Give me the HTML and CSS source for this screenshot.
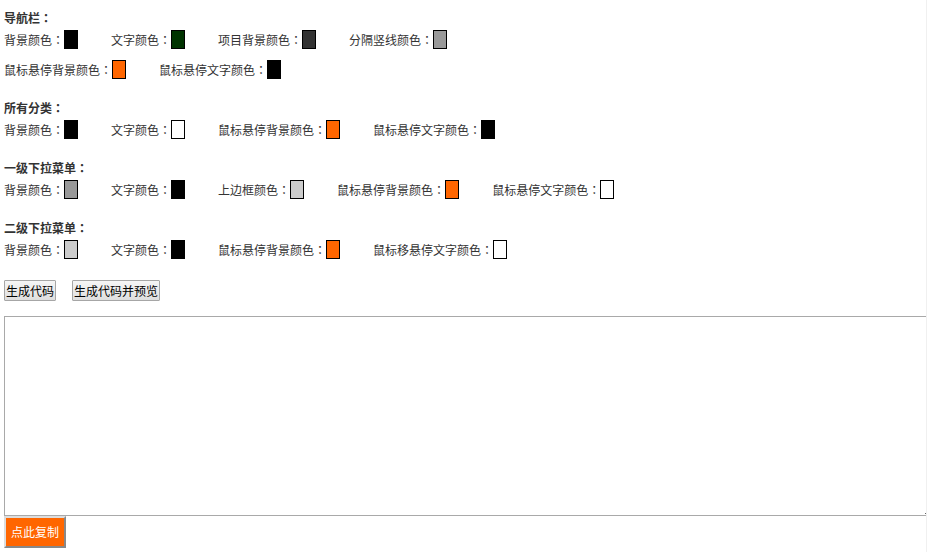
FILE: index.html
```html
<!DOCTYPE html>
<html lang="zh-CN">
<head>
<meta charset="utf-8">
<title>导航颜色设置</title>
<link rel="stylesheet" href="styles.css">
</head>
<body>
<main class="page">
  <section class="group">
    <h2 class="title">导航栏<span class="colon" lang="zh-TW">：</span></h2>
    <div class="row">
      <label class="field">背景颜色<span class="colon">：</span><input class="swatch" type="color" value="#000000"></label>
      <label class="field">文字颜色<span class="colon">：</span><input class="swatch" type="color" value="#003300"></label>
      <label class="field">项目背景颜色<span class="colon">：</span><input class="swatch" type="color" value="#333333"></label>
      <label class="field">分隔竖线颜色<span class="colon">：</span><input class="swatch" type="color" value="#999999"></label>
    </div>
    <div class="row">
      <label class="field">鼠标悬停背景颜色<span class="colon">：</span><input class="swatch" type="color" value="#ff6600"></label>
      <label class="field">鼠标悬停文字颜色<span class="colon">：</span><input class="swatch" type="color" value="#000000"></label>
    </div>
  </section>

  <section class="group">
    <h2 class="title">所有分类<span class="colon" lang="zh-TW">：</span></h2>
    <div class="row">
      <label class="field">背景颜色<span class="colon">：</span><input class="swatch" type="color" value="#000000"></label>
      <label class="field">文字颜色<span class="colon">：</span><input class="swatch" type="color" value="#ffffff"></label>
      <label class="field">鼠标悬停背景颜色<span class="colon">：</span><input class="swatch" type="color" value="#ff6600"></label>
      <label class="field">鼠标悬停文字颜色<span class="colon">：</span><input class="swatch" type="color" value="#000000"></label>
    </div>
  </section>

  <section class="group">
    <h2 class="title">一级下拉菜单<span class="colon" lang="zh-TW">：</span></h2>
    <div class="row">
      <label class="field">背景颜色<span class="colon">：</span><input class="swatch" type="color" value="#999999"></label>
      <label class="field">文字颜色<span class="colon">：</span><input class="swatch" type="color" value="#000000"></label>
      <label class="field">上边框颜色<span class="colon">：</span><input class="swatch" type="color" value="#cccccc"></label>
      <label class="field">鼠标悬停背景颜色<span class="colon">：</span><input class="swatch" type="color" value="#ff6600"></label>
      <label class="field">鼠标悬停文字颜色<span class="colon">：</span><input class="swatch" type="color" value="#ffffff"></label>
    </div>
  </section>

  <section class="group">
    <h2 class="title">二级下拉菜单<span class="colon" lang="zh-TW">：</span></h2>
    <div class="row">
      <label class="field">背景颜色<span class="colon">：</span><input class="swatch" type="color" value="#cccccc"></label>
      <label class="field">文字颜色<span class="colon">：</span><input class="swatch" type="color" value="#000000"></label>
      <label class="field">鼠标悬停背景颜色<span class="colon">：</span><input class="swatch" type="color" value="#ff6600"></label>
      <label class="field">鼠标移悬停文字颜色<span class="colon">：</span><input class="swatch" type="color" value="#ffffff"></label>
    </div>
  </section>

  <div class="actions">
    <button class="button" type="button">生成代码</button>
    <button class="button" type="button">生成代码并预览</button>
  </div>

  <textarea class="code" aria-label="代码"></textarea>
  <button class="copy" type="button">点此复制</button>
</main>
</body>
</html>
```

FILE: styles.css
```css
* {
  box-sizing: border-box;
}

body {
  margin: 0;
  color: #333;
  background: #fff;
  font: 12px/15px "Noto Sans CJK SC", sans-serif;
  text-spacing-trim: space-all;
}

.page {
  min-height: 100vh;
  padding: 10px 0 4px 4px;
  border-right: 1px solid #f0f0f0;
  overflow: hidden;
}

.group {
  margin-bottom: 21px;
}

.title {
  display: flex;
  margin: 0 0 5px;
  font-size: 12px;
  line-height: 15px;
  font-weight: 500;
}

/* The TC face centres the full-width colon in its box. */
.colon {
  font-family: "Noto Sans CJK TC", sans-serif;
}

.row {
  display: flex;
  gap: 33px;
}

.row + .row {
  margin-top: 11px;
}

.field {
  display: flex;
  align-items: center;
  white-space: nowrap;
}

.swatch {
  appearance: none;
  width: 14px;
  height: 19px;
  padding: 0;
  border: 1px solid #000;
  background: none;
}

.swatch::-webkit-color-swatch-wrapper {
  padding: 0;
}

.swatch::-webkit-color-swatch {
  border: 0;
  border-radius: 0;
}

.title {
  font-weight: bold;
}

.actions {
  display: flex;
  gap: 16px;
  margin-bottom: 15px;
}

.button {
  height: 21px;
  padding: 0 1px;
  border: 1px solid #a6a6a6;
  border-radius: 1px;
  color: #000;
  background: linear-gradient(#f6f6f6, #dedede);
  font: inherit;
}

.code {
  display: block;
  width: calc(100% + 8px);
  height: 200px;
  padding: 2px;
  border: 1px solid #a9a9a9;
  background: #fff;
  font: 13px "Liberation Mono", monospace;
}

.copy {
  display: block;
  height: 32px;
  padding: 0 5px 2px;
  border: 2px solid;
  border-color: #ddd #888 #888 #ddd;
  color: #fff;
  background: #f60;
  font: inherit;
}
```
